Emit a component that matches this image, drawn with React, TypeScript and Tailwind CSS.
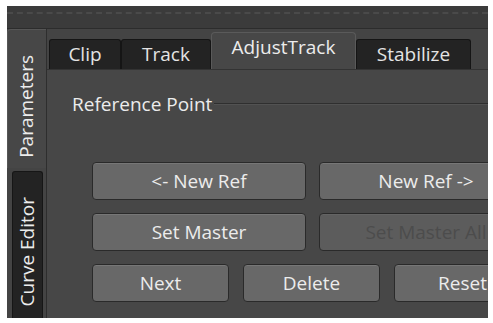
import React from 'react';

function Btn({ label, w, disabled }: { label: string; w: string; disabled?: boolean }) {
  return (
    <div
      className={`${w} h-[38px] shrink-0 rounded-[4px] border border-[#2a2a2a] flex items-center justify-center text-[19px] ${
        disabled
          ? 'bg-[#5c5c5c] text-[#4c4c4c] shadow-[inset_0_1px_0_#646464]'
          : 'bg-[#686868] text-[#ececec] shadow-[inset_0_1px_0_#777777]'
      }`}
    >
      <span className="whitespace-nowrap">{label}</span>
    </div>
  );
}

function Tab({ label, w, active }: { label: string; w: string; active?: boolean }) {
  if (active) {
    return (
      <div className={`${w} h-[37px] shrink-0 bg-[#474747] rounded-t-[4px] border-t border-l border-r border-[#5a5a5a] flex justify-center pt-[5px] text-[#ececec] text-[19px]`}>
        {label}
      </div>
    );
  }
  return (
    <div className={`${w} h-[30px] shrink-0 bg-[#232323] rounded-t-[3px] border-t border-l border-r border-[#151515] flex items-center justify-center text-[#e4e4e4] text-[19px]`}>
      {label}
    </div>
  );
}

export default function App() {
  return (
    <div className="w-[493px] h-[323px] bg-white pt-[6px] pl-[7px] font-['Open_Sans',sans-serif] leading-none">
      <div className="w-[481px] h-[312px] bg-[#444444] flex flex-col overflow-hidden">
        {/* top strip */}
        <div className="h-[23px] shrink-0 bg-[#3b3b3b] border-b border-[#2c2c2c] pt-[6px]">
          <div className="border-t-2 border-dashed border-[#4a4a4a]" />
        </div>

        <div className="flex flex-1 min-h-0">
          {/* vertical tabs */}
          <div className="w-[40px] shrink-0 flex flex-col border-r border-[#2e2e2e]">
            <div className="h-[139px] shrink-0 bg-[#474747] rounded-tl-[4px] border-t border-l border-[#565656] flex items-center justify-center pt-[14px] pr-[2px]">
              <span className="[writing-mode:vertical-rl] rotate-180 text-[19px] text-[#ececec] whitespace-nowrap">
                Parameters
              </span>
            </div>
            <div className="flex-1 ml-[5px] mr-[3px] mt-[3px] bg-[#232323] rounded-t-[3px] border-t border-l border-r border-[#161616] flex items-center justify-center pt-[14px]">
              <span className="[writing-mode:vertical-rl] rotate-180 text-[19px] text-[#ececec] whitespace-nowrap">
                Curve Editor
              </span>
            </div>
          </div>

          {/* main area */}
          <div className="flex-1 min-w-0 flex flex-col">
            <div className="h-[41px] shrink-0 flex items-end pl-[2px] border-b border-[#333333]">
              <Tab label="Clip" w="w-[72px]" />
              <Tab label="Track" w="w-[90px]" />
              <Tab label="AdjustTrack" w="w-[145px]" active />
              <Tab label="Stabilize" w="w-[115px]" />
            </div>

            <div className="flex-1 min-h-0 bg-[#474747] overflow-hidden pl-[25px] pt-[21px]">
              <div className="flex items-center h-[26px]">
                <span className="text-[19px] text-[#ececec] whitespace-nowrap">Reference Point</span>
                <div className="flex-1 ml-[2px] h-[2px] border-t border-[#2f2f2f] border-b border-b-[#525252]" />
              </div>

              <div className="ml-[20px] mt-[45px] flex flex-col gap-[13px] w-[441px]">
                <div className="flex gap-[13px]">
                  <Btn label="<- New Ref" w="w-[214px]" />
                  <Btn label="New Ref ->" w="w-[214px]" />
                </div>
                <div className="flex gap-[13px]">
                  <Btn label="Set Master" w="w-[214px]" />
                  <Btn label="Set Master All" w="w-[214px]" disabled />
                </div>
                <div className="flex gap-[14px]">
                  <Btn label="Next" w="w-[137px]" />
                  <Btn label="Delete" w="w-[137px]" />
                  <Btn label="Reset" w="w-[137px]" />
                </div>
              </div>
            </div>
          </div>
        </div>
      </div>
    </div>
  );
}
